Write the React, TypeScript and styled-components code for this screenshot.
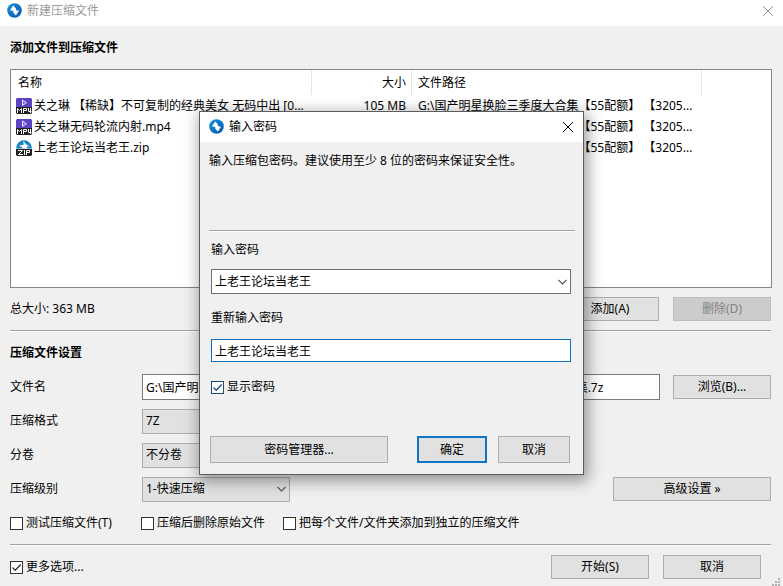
import React, { useState } from "react";
import styled, { createGlobalStyle, css } from "styled-components";

const GlobalStyle = createGlobalStyle`
  *, *::before, *::after { box-sizing: border-box; }
  body {
    margin: 0;
    background: #f0f0f0;
    color: #000;
    font: 12px/16px "Noto Sans", "Noto Sans CJK SC", sans-serif;
  }
  button, input, select { font: inherit; color: inherit; margin: 0; }
`;

const Window = styled.main`
  position: relative;
  display: flex;
  flex-direction: column;
  min-height: 100vh;
  overflow: hidden;
`;

const TitleBar = styled.header<{ $inactive?: boolean }>`
  display: flex;
  align-items: center;
  gap: 5px;
  height: ${(p) => (p.$inactive ? 26 : 30)}px;
  padding: ${(p) => (p.$inactive ? "0 9px 5px 7px" : "0 9px 1px")};
  background: #fff;
  color: ${(p) => (p.$inactive ? "#999" : "#000")};
`;

const Title = styled.h1`
  flex: 1;
  margin: 0;
  font-size: 12px;
  font-weight: 400;
`;

const CloseButton = styled.button`
  display: flex;
  padding: 0;
  border: 0;
  background: none;
`;

const Content = styled.div`
  display: flex;
  flex: 1;
  flex-direction: column;
  padding: 14px 12px 0 10px;
`;

const Heading = styled.h2`
  margin: 0;
  font-size: 12px;
  line-height: 16px;
  font-weight: 700;
`;

const ListBox = styled.div`
  height: 219px;
  margin: 13px -1px 9px 0;
  border: 1px solid #828790;
  background: #fff;
`;

const FileTable = styled.table`
  width: 100%;
  table-layout: fixed;
  border-collapse: separate;
  border-spacing: 0;
`;

const Column = styled.col<{ $width?: number }>`
  ${(p) => p.$width && css`width: ${p.$width}px;`}
`;

const HeadCell = styled.th<{ $right?: boolean; $last?: boolean }>`
  height: 25px;
  padding: 0 5px 0 6px;
  border-right: ${(p) => (p.$last ? 0 : 1)}px solid #e5e5e5;
  font-weight: 400;
  text-align: ${(p) => (p.$right ? "right" : "left")};

  &:first-child { padding-left: 7px; }
`;

const Cell = styled.td<{ $right?: boolean }>`
  height: 21px;
  padding: 0 6px;
  text-align: ${(p) => (p.$right ? "right" : "left")};
  white-space: nowrap;

  &:first-child { padding: 0 0 0 5px; }
`;

const FileName = styled.span`
  display: flex;
  align-items: center;
  gap: 2px;
`;

const Bar = styled.div`
  display: flex;
  align-items: center;
  gap: 14px;
  margin-bottom: 9px;
`;

const Grow = styled.span`
  flex: 1;
`;

const Divider = styled.hr`
  width: 100%;
  height: 2px;
  margin: 0;
  border: 0;
  border-top: 1px solid #a0a0a0;
  background: #fff;
`;

const Button = styled.button<{ $width?: number; $tall?: boolean; $primary?: boolean }>`
  flex: none;
  width: ${(p) => p.$width ?? 98}px;
  height: ${(p) => (p.$tall ? 27 : 24)}px;
  padding: 0;
  border: ${(p) => (p.$primary ? "2px solid #0f75c4" : "1px solid #adadad")};
  background: #e1e1e1;

  &:disabled {
    border-color: #bfbfbf;
    background: #ccc;
    color: #838383;
  }
`;

const Settings = styled.section`
  display: flex;
  flex-direction: column;
  padding-top: 13px;
`;

const SettingRows = styled.div`
  margin-top: 9px;
`;

const SettingRow = styled.div`
  display: flex;
  align-items: center;
  height: 34px;

  > label { flex: none; width: 132px; }
  > button { margin-left: 13px; }
`;

const TextField = styled.input<{ $focused?: boolean; $tall?: boolean }>`
  width: 100%;
  height: ${(p) => (p.$tall ? 26 : 23)}px;
  padding: 0 3px;
  border: 1px solid ${(p) => (p.$focused ? "#0f6fb5" : "#7a7a7a")};
  background: #fff;
  outline: 0;
`;

const SelectWrap = styled.div<{ $width?: number }>`
  display: grid;
  align-items: center;
  width: ${(p) => (p.$width ? `${p.$width}px` : "100%")};

  > * { grid-area: 1 / 1; }
  > svg { justify-self: end; margin-right: 3px; pointer-events: none; }
`;

const SelectBox = styled.select<{ $light?: boolean }>`
  appearance: none;
  width: 100%;
  height: 25px;
  padding: 0 20px 0 3px;
  border: 1px solid ${(p) => (p.$light ? "#707070" : "#adadad")};
  border-radius: 0;
  background: ${(p) => (p.$light ? "#fff" : "#e1e1e1")};
`;

const CheckLabel = styled.label`
  display: flex;
  align-items: center;
  gap: 3px;
`;

const CheckWrap = styled.span`
  display: grid;
  > * { grid-area: 1 / 1; }
  > svg { pointer-events: none; }
`;

const CheckBox = styled.input<{ $accent?: boolean }>`
  appearance: none;
  width: 13px;
  height: 13px;
  border: 1px solid ${(p) => (p.$accent ? "#1c4a7d" : "#333")};
  background: #fff;
`;

const Options = styled.div`
  display: grid;
  grid-template-columns: 131px 142px 1fr;
  align-items: center;
  height: 34px;
  margin-bottom: 4px;
`;

const Footer = styled.footer`
  display: flex;
  flex: 1;
  align-items: flex-start;
  gap: 14px;
  padding: 9px 10px 0 0;

  > label { margin-top: 4px; }
`;

const Grip = styled.svg`
  position: absolute;
  right: 2px;
  bottom: 0;
`;

const Overlay = styled.div`
  position: absolute;
  inset: 0;
  display: flex;
  align-items: center;
  justify-content: center;
`;

const Dialog = styled.section`
  width: 385px;
  border: 1px solid #5c5c5c;
  background: #f0f0f0;
  box-shadow: 2px 4px 14px 2px rgba(0, 0, 0, 0.38);
`;

const DialogBody = styled.form`
  display: flex;
  flex-direction: column;
  padding: 11px 8px 11px 9px;
`;

const Note = styled.p`
  height: 77px;
  margin: 0;
`;

const Fields = styled.div`
  display: flex;
  flex-direction: column;
  padding: 10px 4px 0 2px;
`;

const FieldLabel = styled.label<{ $second?: boolean }>`
  margin: ${(p) => (p.$second ? "16px 0 13px" : "0 0 11px")};
`;

const ShowRow = styled.div`
  display: flex;
  margin: 17px 0 41px;
`;

const DialogActions = styled.div`
  display: flex;
  gap: 11px;
  padding: 0 5px 0 1px;
`;

const Logo = () => (
  <svg width="15" height="15" viewBox="0 0 15 15" aria-hidden="true">
    <defs>
      <linearGradient id="logo" x1="0" y1="0" x2="1" y2="1">
        <stop offset="0" stopColor="#1593dc" />
        <stop offset="1" stopColor="#0757b0" />
      </linearGradient>
    </defs>
    <circle cx="7.5" cy="7.5" r="7.3" fill="url(#logo)" />
    <path d="M6.2 2.6 9 5.6 8.8 7 12 7.7 8.9 12.4 6.1 9.4 6.3 8 3 7.3Z" fill="#fff" />
  </svg>
);

const Cross = () => (
  <svg width="12" height="12" viewBox="0 0 12 12" fill="none" stroke="currentColor" aria-hidden="true">
    <path d="M1 1 11 11M11 1 1 11" strokeWidth="1" />
  </svg>
);

const Chevron = () => (
  <svg width="11" height="8" viewBox="0 0 11 8" fill="none" stroke="#555" strokeWidth="1.1" aria-hidden="true">
    <path d="M1.5 2 5.5 6 9.5 2" />
  </svg>
);

const BadgeMark = ({ zip }: { zip?: boolean }) => (
  <g stroke="#fff" strokeWidth="1" fill="none">
    {zip ? (
      <path d="M2 10.5H6.5L2.5 14.5H7M8.5 10V15M10.5 15V10.5H13.5V12.5H10.5" />
    ) : (
      <path d="M1.5 15V10.5L3.5 12.5 5.5 10.5V15M7.5 15V10.5H10.5V12.5H7.5M12.5 10V13.5H15.5M14.5 10V15" />
    )}
  </g>
);

const FileIcon = ({ zip }: { zip?: boolean }) => (
  <svg width="16" height="16" viewBox="0 0 16 16" aria-hidden="true">
    {zip ? (
      <>
        <path d="M0 8.5A8 8.3 0 0 1 16 8.5Z" fill="#1682c9" />
        <path d="M7.4 1 10.2 4.4 13.5 6.2 10.8 6.8 11.2 8.5H6.6L6.4 7.6 2.8 5.8 7.6 4.8Z" fill="#fff" />
        <path d="M0 9H16V15L15 16H1L0 15Z" fill="#222" />
      </>
    ) : (
      <>
        <path d="M1 0H15L16 1V9H0V1Z" fill="#5b43c4" />
        <path d="M6.5 2V7.4L10.5 4.7Z" fill="#7560d3" stroke="#e8e2ff" />
        <path d="M0 9H16V15L15 16H1L0 15Z" fill="#202020" />
      </>
    )}
    <BadgeMark zip={zip} />
  </svg>
);

type CheckProps = { label: string; initial?: boolean; accent?: boolean };

const Check = ({ label, initial = false, accent }: CheckProps) => {
  const [on, setOn] = useState(initial);
  return (
    <CheckLabel>
      <CheckWrap>
        <CheckBox type="checkbox" $accent={accent} checked={on} onChange={() => setOn(!on)} />
        {on && (
          <svg width="13" height="13" viewBox="0 0 13 13" fill="none" stroke={accent ? "#1c4a7d" : "#333"} strokeWidth="1.3" aria-hidden="true">
            <path d="M2.5 6.5 5.2 9.2 10.7 3.5" />
          </svg>
        )}
      </CheckWrap>
      {label}
    </CheckLabel>
  );
};

type SelectProps = { id: string; value: string; width?: number; light?: boolean };

const Select = ({ id, value, width, light }: SelectProps) => (
  <SelectWrap $width={width}>
    <SelectBox id={id} $light={light} defaultValue={value}>
      <option>{value}</option>
    </SelectBox>
    <Chevron />
  </SelectWrap>
);

const folder = "G:\\国产明星换脸三季度大合集【55配额】 【3205...";

const files = [
  { name: "关之琳 【稀缺】不可复制的经典美女 无码中出 [0...", size: "105 MB", zip: false },
  { name: "关之琳无码轮流内射.mp4", size: "", zip: false },
  { name: "上老王论坛当老王.zip", size: "", zip: true },
];

const settings = [
  { id: "format", label: "压缩格式", value: "7Z" },
  { id: "volume", label: "分卷", value: "不分卷" },
  { id: "level", label: "压缩级别", value: "1-快速压缩" },
];

const PasswordDialog = () => (
  <Overlay>
    <Dialog role="dialog" aria-label="输入密码">
      <TitleBar>
        <Logo />
        <Title as="h2">输入密码</Title>
        <CloseButton aria-label="关闭"><Cross /></CloseButton>
      </TitleBar>
      <DialogBody onSubmit={(e) => e.preventDefault()}>
        <Note>输入压缩包密码。建议使用至少 8 位的密码来保证安全性。</Note>
        <Divider />
        <Fields>
          <FieldLabel htmlFor="password">输入密码</FieldLabel>
          <Select id="password" value="上老王论坛当老王" light />
          <FieldLabel htmlFor="repeat" $second>重新输入密码</FieldLabel>
          <TextField id="repeat" defaultValue="上老王论坛当老王" $focused />
          <ShowRow><Check label="显示密码" initial accent /></ShowRow>
        </Fields>
        <DialogActions>
          <Button type="button" $width={178} $tall>密码管理器...</Button>
          <Grow />
          <Button $width={70} $tall $primary>确定</Button>
          <Button type="button" $width={72} $tall>取消</Button>
        </DialogActions>
      </DialogBody>
    </Dialog>
  </Overlay>
);

export default function App() {
  return (
    <Window>
      <GlobalStyle />
      <TitleBar $inactive>
        <Logo />
        <Title>新建压缩文件</Title>
        <CloseButton aria-label="关闭"><Cross /></CloseButton>
      </TitleBar>
      <Content>
        <Heading>添加文件到压缩文件</Heading>
        <ListBox>
          <FileTable>
            <colgroup>
              <Column $width={301} />
              <Column $width={100} />
              <Column $width={290} />
              <Column />
            </colgroup>
            <thead>
              <tr>
                <HeadCell>名称</HeadCell>
                <HeadCell $right>大小</HeadCell>
                <HeadCell>文件路径</HeadCell>
                <HeadCell $last />
              </tr>
            </thead>
            <tbody>
              {files.map((f) => (
                <tr key={f.name}>
                  <Cell><FileName><FileIcon zip={f.zip} />{f.name}</FileName></Cell>
                  <Cell $right>{f.size}</Cell>
                  <Cell>{folder}</Cell>
                  <Cell />
                </tr>
              ))}
            </tbody>
          </FileTable>
        </ListBox>
        <Bar>
          <span>总大小: 363 MB</span>
          <Grow />
          <Button>添加(A)</Button>
          <Button disabled>删除(D)</Button>
        </Bar>
        <Divider />
        <Settings>
          <Heading>压缩文件设置</Heading>
          <SettingRows>
            <SettingRow>
              <label htmlFor="filename">文件名</label>
              <TextField
                id="filename"
                $tall
                defaultValue={"G:\\国产明星换脸三季度大合集【55配额】 【3205】\\上老王论坛当老王\\关之琳合集.7z"}
              />
              <Button>浏览(B)...</Button>
            </SettingRow>
            {settings.map((s) => (
              <SettingRow key={s.id}>
                <label htmlFor={s.id}>{s.label}</label>
                <Select id={s.id} value={s.value} width={148} />
                {s.id === "level" && (
                  <>
                    <Grow />
                    <Button $width={158}>高级设置 »</Button>
                  </>
                )}
              </SettingRow>
            ))}
          </SettingRows>
        </Settings>
        <Options>
          <Check label="测试压缩文件(T)" />
          <Check label="压缩后删除原始文件" />
          <Check label="把每个文件/文件夹添加到独立的压缩文件" />
        </Options>
        <Divider />
        <Footer>
          <Check label="更多选项..." initial />
          <Grow />
          <Button>开始(S)</Button>
          <Button>取消</Button>
        </Footer>
      </Content>
      <Grip width="9" height="8" viewBox="0 0 9 8" fill="#b0b0b0" aria-hidden="true">
        <path d="M6 0h2v2H6zM3 3h2v2H3zM6 3h2v2H6zM0 6h2v2H0zM3 6h2v2H3zM6 6h2v2H6z" />
      </Grip>
      <PasswordDialog />
    </Window>
  );
}
